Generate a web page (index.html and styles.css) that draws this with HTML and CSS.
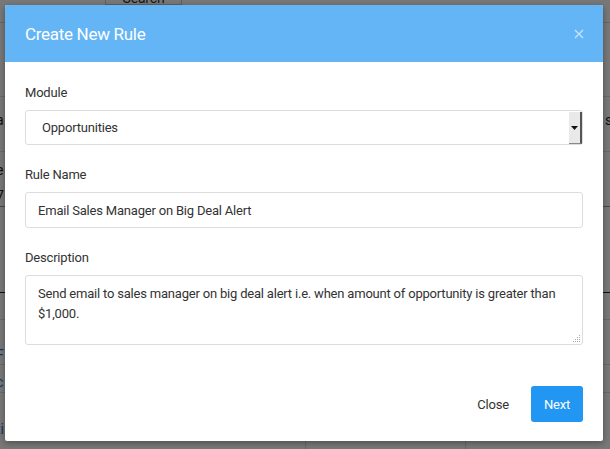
FILE: index.html
```html
<!DOCTYPE html>
<html>
<head>
<meta charset="utf-8">
<link rel="stylesheet" href="styles.css">
</head>
<body>
<div class="page">
  <div class="toolbar"><span class="search-btn">Search</span></div>
  <div class="row r1"></div>
  <div class="row r2"><span class="frag">a</span><span class="frag right">s</span></div>
  <div class="row r3"><span class="frag">e</span><span class="frag seven">7</span></div>
  <div class="row r4"></div>
  <div class="row r5"></div>
  <div class="row r6"><span class="frag link">F</span></div>
  <div class="row r7"><span class="frag link">c</span></div>
  <div class="row r8"><span class="frag link">ti</span><span class="cell c1"></span><span class="cell c2"></span></div>
</div>
<div class="overlay"></div>
<div class="modal">
  <div class="modal-header">
    <h1 class="modal-title">Create New Rule</h1>
    <span class="close-x"><svg width="10" height="10" viewBox="0 0 10 10"><path d="M1 1L9 9M9 1L1 9" stroke="#c9e4fb" stroke-width="1.3" fill="none"/></svg></span>
  </div>
  <div class="modal-body">
    <div class="form-group">
      <label class="label">Module</label>
      <div class="select">
        <span class="select-text">Opportunities</span>
        <span class="select-arrow"><svg width="7" height="4" viewBox="0 0 7 4"><path d="M0 0H7L3.5 4Z" fill="#111"/></svg></span>
      </div>
    </div>
    <div class="form-group">
      <label class="label">Rule Name</label>
      <div class="input">Email Sales Manager on Big Deal Alert</div>
    </div>
    <div class="form-group">
      <label class="label">Description</label>
      <div class="textarea">Send email to sales manager on big deal alert i.e. when amount of opportunity is greater than $1,000.
        <span class="grip"><svg width="9" height="9" viewBox="0 0 9 9"><g fill="#aaa"><rect x="7" y="1" width="1" height="1"/><rect x="5" y="3" width="1" height="1"/><rect x="7" y="3" width="1" height="1"/><rect x="3" y="5" width="1" height="1"/><rect x="5" y="5" width="1" height="1"/><rect x="7" y="5" width="1" height="1"/><rect x="1" y="7" width="1" height="1"/><rect x="3" y="7" width="1" height="1"/><rect x="5" y="7" width="1" height="1"/><rect x="7" y="7" width="1" height="1"/></g></svg></span>
      </div>
    </div>
  </div>
  <div class="modal-footer">
    <button class="btn btn-link">Close</button>
    <button class="btn btn-primary">Next</button>
  </div>
</div>
</body>
</html>
```
FILE: styles.css
```css
* { box-sizing: border-box; }
html, body { margin: 0; padding: 0; }
body {
  width: 610px;
  height: 449px;
  overflow: hidden;
  background: #fff;
  font-family: Roboto, "Liberation Sans", sans-serif;
  color: #333;
  font-size: 13px;
  letter-spacing: -0.2px;
  position: relative;
}
.page { width: 610px; height: 449px; }
.toolbar {
  height: 23px;
  border-bottom: 1px solid #ddd;
  position: relative;
}
.search-btn {
  position: absolute;
  left: 105px; top: -10px;
  width: 77px; height: 15px;
  border: 1px solid #ccc;
  font-size: 14px;
  text-align: center;
  line-height: 14px;
}
.row { border-bottom: 1px solid #ddd; position: relative; }
.r1 { height: 74px; }
.r2 { height: 55px; }
.r3 { height: 55px; border-bottom-color: #999; }
.r4 { height: 86px; border-bottom: 1px solid #222; }
.r5 { height: 27px; }
.r6 { height: 45px; }
.r7 { height: 28px; }
.r8 { height: 60px; }
.frag { position: absolute; left: -4px; font-size: 14px; color: #222; }
.frag.right { left: auto; right: -2px; }
.r2 .frag { top: 15px; }
.r3 .frag { top: 10px; }
.r3 .frag.seven { top: 36px; }
.r6 .frag { top: 27px; }
.r7 .frag { top: 9px; }
.r8 .frag { top: 28px; }
.link { color: #1976d2; }
.cell { position: absolute; top: 0; bottom: 0; border-left: 1px solid #ddd; }
.c1 { left: 305px; }
.c2 { left: 465px; }
.overlay {
  position: absolute;
  inset: 0;
  background: rgba(0, 0, 0, 0.53);
}
.modal {
  position: absolute;
  left: 5px; top: 5px;
  width: 598px; height: 436px;
  background: #fff;
  border-radius: 2px;
  box-shadow: 0 2px 6px rgba(0,0,0,0.35);
  display: flex;
  flex-direction: column;
}
.modal-header {
  height: 57px;
  background: #64b5f6;
  border-radius: 2px 2px 0 0;
  display: flex;
  align-items: center;
  justify-content: space-between;
  padding: 0 20px;
}
.modal-title {
  margin: 0;
  font-size: 17px;
  font-weight: 400;
  color: #fff;
  letter-spacing: -0.3px;
}
.close-x { display: flex; margin-right: -1px; margin-top: 1px; }
.modal-body { padding: 22px 20px 0; }
.form-group { margin-bottom: 21px; display: flex; flex-direction: column; }
.label { display: block; line-height: 18px; margin-bottom: 8px; color: #333; }
.select, .input {
  height: 36px;
  border: 1px solid #ddd;
  border-radius: 3px;
  display: flex;
  align-items: center;
  color: #333;
}
.select { height: 35px; position: relative; padding-left: 16px; }
.select-arrow {
  position: absolute;
  right: 0; top: 1px;
  width: 13px; height: 32px;
  background: #e9e9e9;
  border-right: 2px solid #555;
  border-bottom: 1px solid #888;
  display: flex; align-items: center; justify-content: center;
}
.input { padding-left: 12px; }
.textarea {
  height: 70px;
  border: 1px solid #ddd;
  border-radius: 3px;
  padding: 8px 12px;
  line-height: 19.5px;
  position: relative;
}
.grip { position: absolute; right: 1px; bottom: 1px; display: flex; }
.modal-footer {
  margin-top: auto;
  padding: 0 20px 19px;
  display: flex;
  justify-content: flex-end;
  gap: 9px;
}
.btn {
  height: 36px;
  padding: 0 13px;
  border: none;
  border-radius: 3px;
  font-family: Roboto, "Liberation Sans", sans-serif;
  font-size: 13px;
  letter-spacing: -0.2px;
  background: transparent;
  color: #333;
}
.btn-primary { background: #2196f3; color: #fff; }
```
